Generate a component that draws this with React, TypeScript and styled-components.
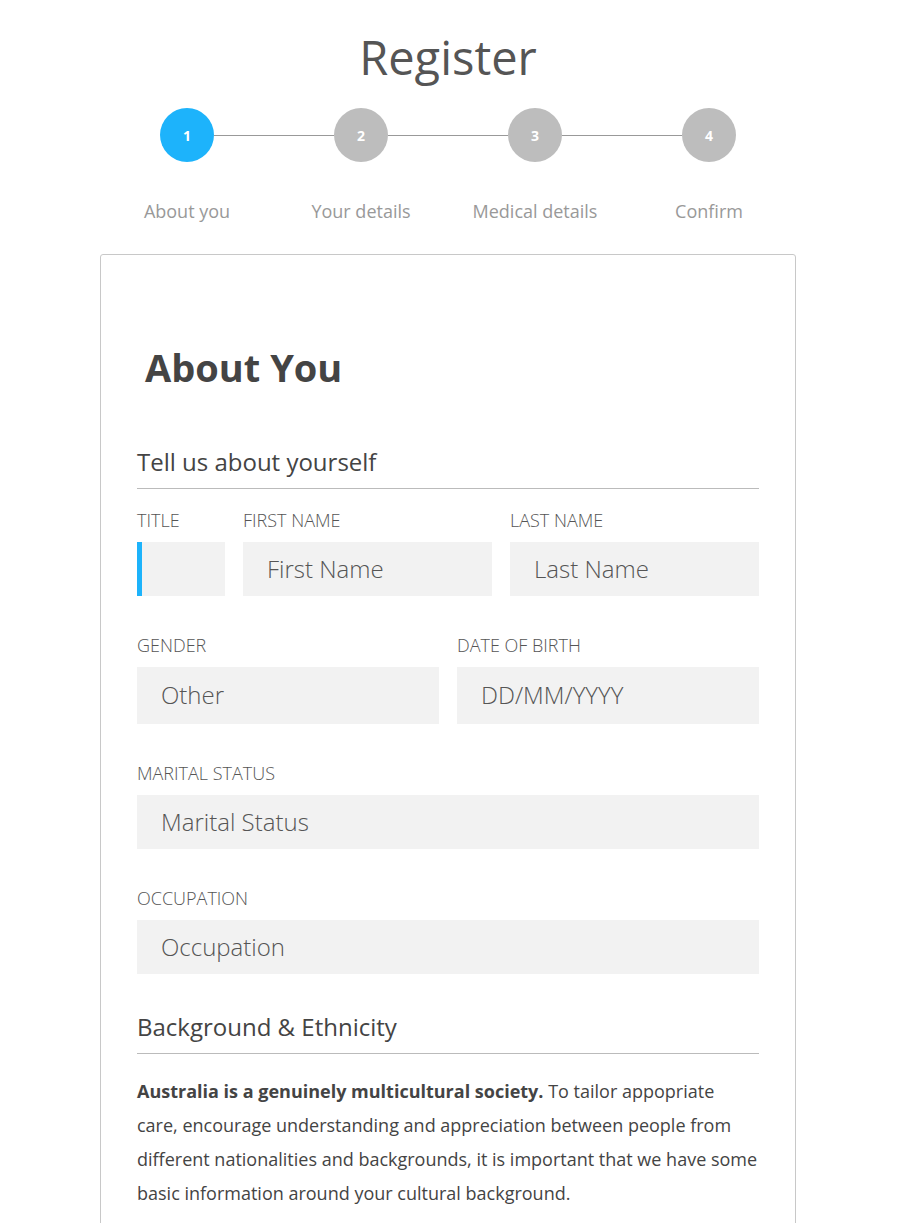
import React from "react";
import styled, { createGlobalStyle } from "styled-components";

const GlobalStyle = createGlobalStyle`
  html, body {
    margin: 0;
    padding: 0;
    background: #ffffff;
    font-family: "Open Sans", "Noto Sans", Arial, sans-serif;
    color: #444444;
  }
  * { box-sizing: border-box; }
`;

const Page = styled.div`
  width: 896px;
  padding-top: 27px;
`;

const Inner = styled.div`
  width: 696px;
  margin: 0 auto;
`;

const Title = styled.h1`
  margin: 0;
  text-align: center;
  font-size: 47px;
  line-height: 61px;
  font-weight: 400;
  color: #555555;
`;

const Track = styled.div`
  display: flex;
  align-items: center;
  padding: 0 60px;
  margin-top: 20px;
`;

const Circle = styled.div<{ $active?: boolean }>`
  flex: 0 0 54px;
  width: 54px;
  height: 54px;
  border-radius: 50%;
  background: ${(p) => (p.$active ? "#1db3fb" : "#bdbdbd")};
  color: #ffffff;
  display: flex;
  align-items: center;
  justify-content: center;
  font-size: 14px;
  font-weight: 700;
`;

const Connector = styled.div`
  flex: 1 1 auto;
  height: 1px;
  background: #999999;
`;

const StepLabels = styled.div`
  display: grid;
  grid-template-columns: repeat(4, 1fr);
  margin-top: 37px;
`;

const StepLabel = styled.div`
  text-align: center;
  font-size: 18px;
  line-height: 24px;
  color: #999999;
  font-weight: 400;
`;

const Card = styled.section`
  margin-top: 31px;
  border: 1px solid #c8c8c8;
  border-radius: 3px;
  padding: 0 36px 60px;
`;

const CardHeading = styled.h2`
  margin: 86px 0 0;
  padding-left: 8px;
  font-size: 38px;
  line-height: 52px;
  font-weight: 700;
  color: #444444;
`;

const SectionTitle = styled.h3<{ $gap: number }>`
  margin: ${(p) => p.$gap}px 0 0;
  padding-bottom: 11px;
  border-bottom: 1px solid #bbbbbb;
  font-size: 24px;
  line-height: 30px;
  font-weight: 400;
  color: #444444;
`;

const Row = styled.div<{ $cols: string; $gap: number }>`
  display: grid;
  grid-template-columns: ${(p) => p.$cols};
  column-gap: 18px;
  margin-top: ${(p) => p.$gap}px;
`;

const Group = styled.label`
  display: flex;
  flex-direction: column;
  min-width: 0;
`;

const Label = styled.span`
  display: block;
  font-size: 18px;
  line-height: 22px;
  font-weight: 300;
  color: #555555;
  text-transform: uppercase;
  margin-bottom: 11px;
`;

const fieldBase = `
  width: 100%;
  border: none;
  outline: none;
  border-radius: 0;
  background: #f2f2f2;
  font-family: "Open Sans", "Noto Sans", Arial, sans-serif;
  font-size: 24px;
  font-weight: 300;
  color: #555555;
  padding: 0 24px 2px;
  margin: 0;
`;

const Input = styled.input<{ $h?: number }>`
  ${fieldBase}
  height: ${(p) => p.$h ?? 54}px;
  &::placeholder {
    color: #555555;
    opacity: 1;
  }
`;

const Select = styled.select<{ $h?: number; $focused?: boolean }>`
  ${fieldBase}
  appearance: none;
  -webkit-appearance: none;
  height: ${(p) => p.$h ?? 54}px;
  border-left: ${(p) => (p.$focused ? "5px solid #1db3fb" : "none")};
`;

const Paragraph = styled.p`
  margin: 20px 0 0;
  font-size: 18px;
  line-height: 34px;
  font-weight: 400;
  color: #444444;
  strong {
    font-weight: 700;
  }
`;

const steps = ["About you", "Your details", "Medical details", "Confirm"];

export default function App() {
  return (
    <>
      <GlobalStyle />
      <Page>
        <Inner>
          <Title>Register</Title>
          <Track>
            {steps.map((s, i) => (
              <React.Fragment key={s}>
                {i > 0 && <Connector />}
                <Circle $active={i === 0}>{i + 1}</Circle>
              </React.Fragment>
            ))}
          </Track>
          <StepLabels>
            {steps.map((s) => (
              <StepLabel key={s}>{s}</StepLabel>
            ))}
          </StepLabels>

          <Card>
            <CardHeading>About You</CardHeading>
            <SectionTitle $gap={54}>Tell us about yourself</SectionTitle>

            <Row $cols="88px 1fr 1fr" $gap={20}>
              <Group>
                <Label>Title</Label>
                <Select $focused defaultValue="">
                  <option value=""></option>
                  <option value="mr">Mr</option>
                  <option value="ms">Ms</option>
                </Select>
              </Group>
              <Group>
                <Label>First Name</Label>
                <Input placeholder="First Name" />
              </Group>
              <Group>
                <Label>Last Name</Label>
                <Input placeholder="Last Name" />
              </Group>
            </Row>

            <Row $cols="1fr 1fr" $gap={38}>
              <Group>
                <Label>Gender</Label>
                <Select $h={57} defaultValue="other">
                  <option value="female">Female</option>
                  <option value="male">Male</option>
                  <option value="other">Other</option>
                </Select>
              </Group>
              <Group>
                <Label>Date of Birth</Label>
                <Input $h={57} placeholder="DD/MM/YYYY" />
              </Group>
            </Row>

            <Row $cols="1fr" $gap={38}>
              <Group>
                <Label>Marital Status</Label>
                <Select defaultValue="">
                  <option value="">Marital Status</option>
                  <option value="single">Single</option>
                  <option value="married">Married</option>
                </Select>
              </Group>
            </Row>

            <Row $cols="1fr" $gap={38}>
              <Group>
                <Label>Occupation</Label>
                <Input placeholder="Occupation" />
              </Group>
            </Row>

            <SectionTitle $gap={38}>Background &amp; Ethnicity</SectionTitle>
            <Paragraph>
              <strong>Australia is a genuinely multicultural society.</strong> To tailor
              appopriate care, encourage understanding and appreciation between people from
              different nationalities and backgrounds, it is important that we have some
              basic information around your cultural background.
            </Paragraph>
          </Card>
        </Inner>
      </Page>
    </>
  );
}
